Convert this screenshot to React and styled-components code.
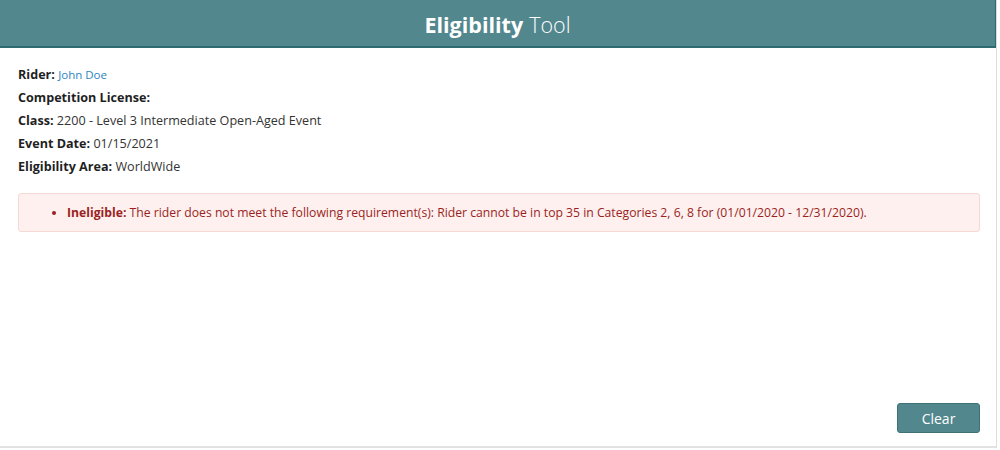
import React from 'react';
import styled, { createGlobalStyle } from 'styled-components';

const GlobalStyle = createGlobalStyle`
  html, body {
    margin: 0;
    padding: 0;
    background: #ffffff;
  }
  body {
    font-family: "Open Sans", "Liberation Sans", sans-serif;
    color: #222;
  }
`;

const Panel = styled.div`
  width: 997px;
  height: 448px;
  box-sizing: border-box;
  border-right: 1px solid #dcdcdc;
  border-bottom: 2px solid #e2e2e2;
  display: flex;
  flex-direction: column;
`;

const Header = styled.header`
  height: 48px;
  box-sizing: border-box;
  background: #52878e;
  border-bottom: 2px solid #2e6b71;
  border-right: 1px solid #2e6b71;
  display: flex;
  align-items: center;
  justify-content: center;
  color: #ffffff;
  font-size: 21.5px;
  padding-top: 2px;

  strong {
    font-weight: 700;
    margin-right: 6px;
  }
  span {
    font-weight: 300;
  }
`;

const Body = styled.div`
  flex: 1;
  display: flex;
  flex-direction: column;
  padding: 15px 16px 13px 18px;
`;

const InfoList = styled.div`
  display: flex;
  flex-direction: column;
`;

const InfoRow = styled.div`
  font-size: 12.6px;
  line-height: 23px;
  color: #333;

  b {
    font-weight: 700;
    color: #1f1f1f;
  }
`;

const RiderLink = styled.a`
  color: #2b86bd;
  text-decoration: none;
  font-size: 11.5px;
`;

const Alert = styled.div`
  margin-top: 15px;
  background: #fdf0ef;
  border: 1px solid #f6d8d5;
  border-radius: 3px;
  color: #9b1f22;
  font-size: 12.2px;
  line-height: 17px;

  ul {
    margin: 0;
    padding: 10px 0 10px 48px;
  }
  b {
    font-weight: 700;
  }
`;

const Footer = styled.div`
  margin-top: auto;
  display: flex;
  justify-content: flex-end;
`;

const Button = styled.button`
  width: 83px;
  height: 30px;
  background: #52878e;
  border: 1px solid #3f7278;
  border-radius: 3px;
  color: #ffffff;
  font-family: "Open Sans", "Liberation Sans", sans-serif;
  font-size: 14px;
  cursor: pointer;
`;

export default function App() {
  return (
    <>
      <GlobalStyle />
      <Panel>
        <Header>
          <strong>Eligibility</strong>
          <span>Tool</span>
        </Header>
        <Body>
          <InfoList>
            <InfoRow>
              <b>Rider:</b> <RiderLink href="#">John Doe</RiderLink>
            </InfoRow>
            <InfoRow>
              <b>Competition License:</b>
            </InfoRow>
            <InfoRow>
              <b>Class:</b> 2200 - Level 3 Intermediate Open-Aged Event
            </InfoRow>
            <InfoRow>
              <b>Event Date:</b> 01/15/2021
            </InfoRow>
            <InfoRow>
              <b>Eligibility Area:</b> WorldWide
            </InfoRow>
          </InfoList>
          <Alert>
            <ul>
              <li>
                <b>Ineligible:</b> The rider does not meet the following requirement(s): Rider cannot be in top 35 in Categories 2, 6, 8 for (01/01/2020 - 12/31/2020).
              </li>
            </ul>
          </Alert>
          <Footer>
            <Button>Clear</Button>
          </Footer>
        </Body>
      </Panel>
    </>
  );
}
